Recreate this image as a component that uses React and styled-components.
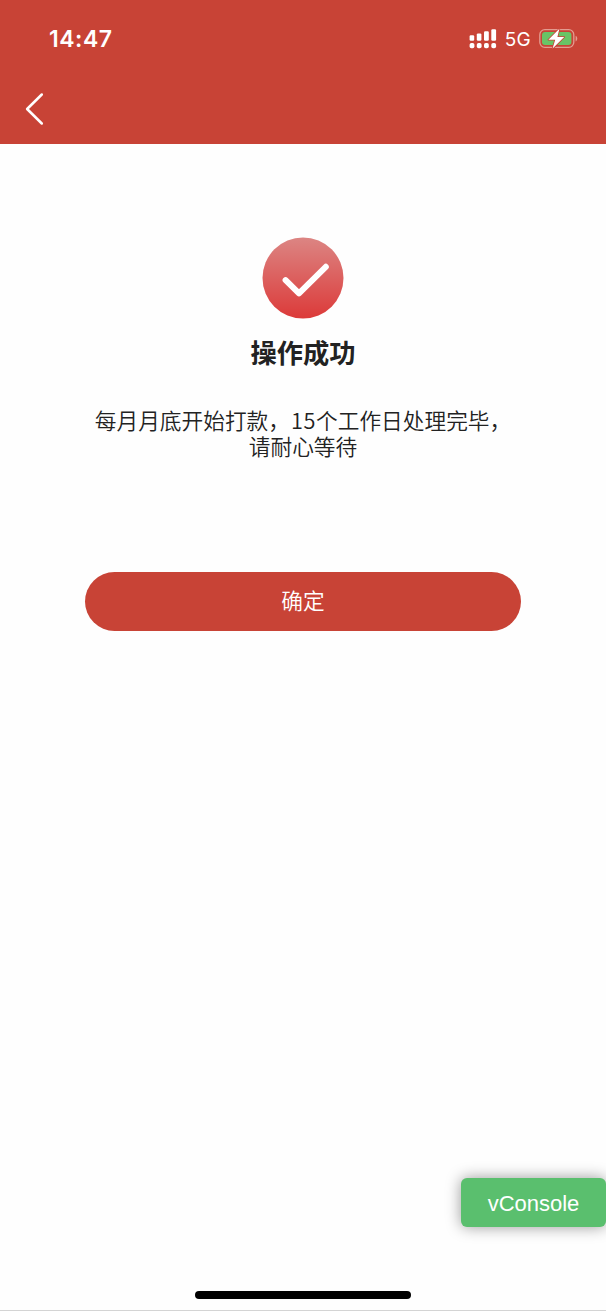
import React from 'react';
import styled, { createGlobalStyle } from 'styled-components';

const App = () => (
    <Page>
        <GlobalStyle />
        <Header>
            <StatusBar>
                <Time>14:47</Time>
                <Status>
                    <SignalIcon />
                    <Network>5G</Network>
                    <BatteryIcon />
                </Status>
            </StatusBar>
            <NavBar>
                <BackButton aria-label="返回">
                    <svg width="20" height="34" viewBox="0 0 20 34" fill="none" stroke="#fff" strokeWidth="2.5" strokeLinecap="round" strokeLinejoin="round">
                        <path d="M16.8 2.5L2.1 17L16.8 31.5" />
                    </svg>
                </BackButton>
            </NavBar>
        </Header>
        <Content>
            <SuccessIcon />
            <Title>操作成功</Title>
            <Message>每月月底开始打款，<Days>15</Days>个工作日处理完毕，<br />请耐心等待</Message>
            <ConfirmButton>确定</ConfirmButton>
        </Content>
        <ConsoleButton>vConsole</ConsoleButton>
        <Footer>
            <HomeIndicator />
        </Footer>
    </Page>
);

const SignalIcon = () => (
    <svg width="28" height="20" viewBox="0 0 28 20" fill="#fff">
        <rect x="0.6" y="6.3" width="4.6" height="5.4" rx="1.2" />
        <rect x="7.8" y="4.4" width="4.6" height="7.3" rx="1.2" />
        <rect x="15" y="2.3" width="4.8" height="9.4" rx="1.2" />
        <rect x="22.3" y="0.2" width="4.8" height="11.5" rx="1.2" />
        <rect x="0.6" y="14" width="4.8" height="5.2" rx="1.8" />
        <rect x="7.8" y="14" width="4.8" height="5.2" rx="1.8" />
        <rect x="15" y="14" width="4.8" height="5.2" rx="1.8" />
        <rect x="22.3" y="14" width="4.8" height="5.2" rx="1.8" />
    </svg>
);

const BatteryIcon = () => (
    <svg width="40" height="22" viewBox="0 0 40 22">
        <rect x="0.8" y="1.7" width="34" height="17.6" rx="5" fill="none" stroke="#e39c90" strokeWidth="1.3" />
        <path d="M36.6 7.8C38.8 8.6 38.8 12.6 36.6 13.4Z" fill="#e39c90" />
        <rect x="3" y="4" width="29.4" height="13" rx="3" fill="#69c466" />
        <path d="M20.4 0.8L9.4 11.8H16.2L13.6 20.6L25.2 9H18.4Z" fill="#fff" stroke="#c84336" strokeWidth="1.6" strokeLinejoin="round" paintOrder="stroke" />
    </svg>
);

const SuccessIcon = () => (
    <svg width="82" height="82" viewBox="0 0 82 82" fill="none">
        <defs>
            <linearGradient id="success" x1="0" y1="0" x2="0" y2="1">
                <stop offset="0" stopColor="#dc8583" />
                <stop offset="1" stopColor="#dc3a39" />
            </linearGradient>
        </defs>
        <circle cx="41" cy="41" r="40.5" fill="url(#success)" />
        <path d="M23.6 43.2L37 56.4L63.8 29.8" stroke="#fff" strokeWidth="6" strokeLinecap="round" strokeLinejoin="round" />
    </svg>
);

const GlobalStyle = createGlobalStyle`
* { box-sizing: border-box; }
body {
    margin: 0;
    background: #fefefe;
    font-family: "Noto Sans CJK SC", sans-serif;
}
button {
    margin: 0;
    padding: 0;
    border: 0;
    font-family: inherit;
}
svg { display: block; }
`;
const Page = styled.div`
height: 1311px;
display: flex;
flex-direction: column;
overflow: hidden;
color: #222;
`;
const Header = styled.header`
height: 144px;
flex: none;
background: #c84336;
color: #fff;
`;
const StatusBar = styled.div`
height: 77px;
padding: 0 27px 0 49px;
display: flex;
align-items: center;
justify-content: space-between;
font-family: Inter, sans-serif;
`;
const Time = styled.div`
font-size: 23px;
font-weight: 600;
letter-spacing: 0.5px;
`;
const Status = styled.div`
display: flex;
align-items: center;
`;
const Network = styled.div`
margin: 2px 8px 0 8px;
font-size: 19px;
line-height: 24px;
letter-spacing: 0.2px;
`;
const NavBar = styled.nav`
padding: 15px 25px;
`;
const BackButton = styled.button`
display: block;
background: none;
`;
const Content = styled.main`
flex: 1;
padding-top: 93px;
display: flex;
flex-direction: column;
align-items: center;
`;
const Title = styled.h1`
margin: 13px 0 0;
font-size: 26.3px;
font-weight: 700;
line-height: 40px;
`;
const Message = styled.p`
margin: 35px 0 0;
font-size: 21.7px;
font-weight: 350;
line-height: 26.4px;
text-align: center;
`;
const Days = styled.span`
margin-left: 1px;
letter-spacing: 0.6px;
`;
const ConfirmButton = styled.button`
width: 436px;
height: 59px;
margin-top: 112px;
padding-bottom: 3px;
border-radius: 30px;
background: #c84336;
color: #fff;
font-size: 21.7px;
font-weight: 350;
`;
const ConsoleButton = styled.button`
width: 145px;
height: 49px;
flex: none;
align-self: flex-end;
padding-top: 2px;
border-radius: 6px;
background: #5abf6e;
box-shadow: 0 0 15px rgba(0,0,0,0.4);
color: #fff;
font-family: "Liberation Sans", Arial, sans-serif;
font-size: 22px;
`;
const Footer = styled.footer`
height: 84px;
flex: none;
padding-top: 64px;
display: flex;
justify-content: center;
border-bottom: 1px solid #d4d4d4;
`;
const HomeIndicator = styled.div`
width: 216px;
height: 8px;
border-radius: 4px;
background: #000;
`;

export default App;
